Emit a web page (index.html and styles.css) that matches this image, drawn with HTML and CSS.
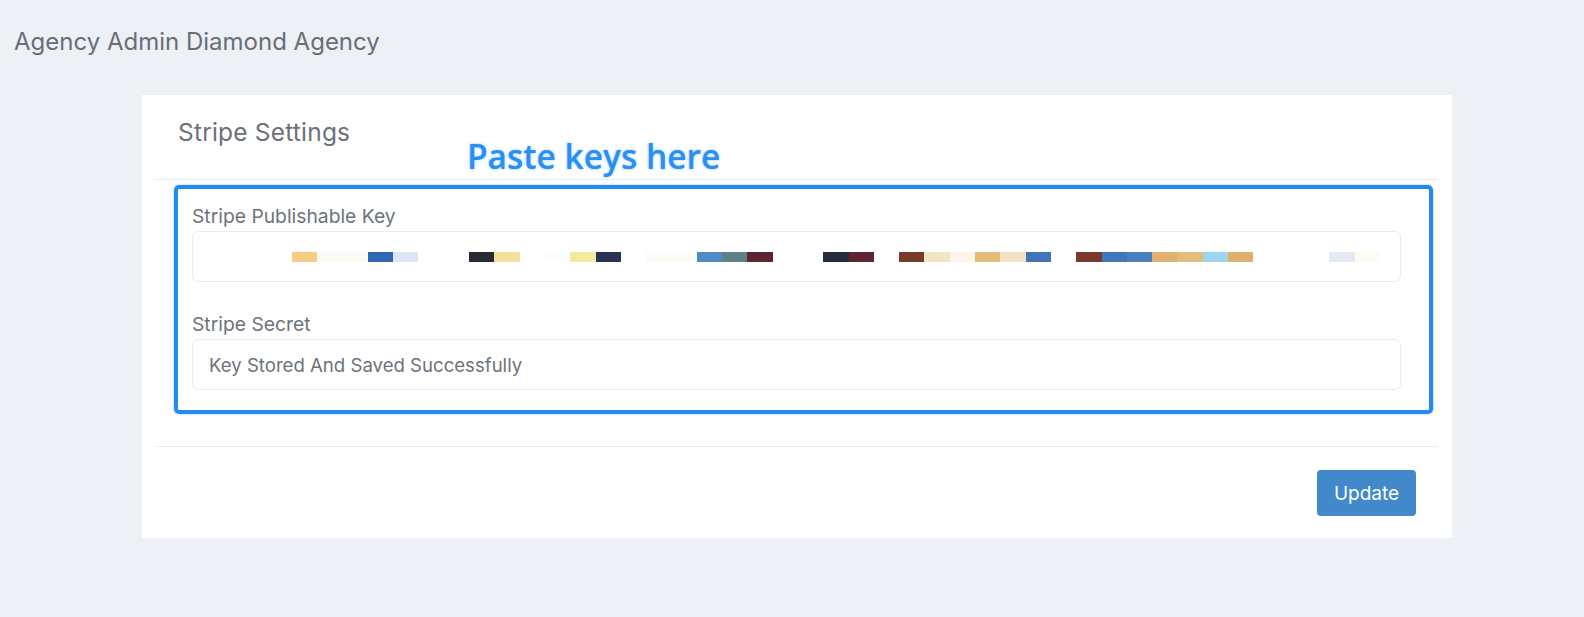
FILE: index.html
```html
<!DOCTYPE html>
<html lang="en">
<head>
<meta charset="utf-8">
<title>Stripe Settings</title>
<link rel="stylesheet" href="styles.css">
</head>
<body>
<div class="page-title">Agency Admin Diamond Agency</div>
<div class="card">
  <div class="card-header">
    <div class="card-title">Stripe Settings</div>
    <div class="annotation">Paste keys here</div>
  </div>
  <div class="highlight">
    <div class="field">
      <label class="field-label">Stripe Publishable Key</label>
      <div class="input input-key"><span class="mosaic"></span></div>
    </div>
    <div class="field">
      <label class="field-label">Stripe Secret</label>
      <div class="input">Key Stored And Saved Successfully</div>
    </div>
  </div>
  <div class="card-footer">
    <button class="btn-update" type="button">Update</button>
  </div>
</div>
</body>
</html>
```

FILE: styles.css
```css
* { box-sizing: border-box; }
html, body { margin: 0; padding: 0; }
body {
  background: #edf0f5;
  font-family: "Inter", "Open Sans", sans-serif;
  color: #6b7079;
  width: 1584px;
  height: 617px;
  overflow: hidden;
}
.page-title {
  padding: 27px 14px 0 14px;
  font-size: 24px;
  line-height: 30px;
  color: #686e77;
}
.card {
  margin: 38px 0 0 142px;
  width: 1310px;
  height: 443px;
  background: #ffffff;
  display: flex;
  flex-direction: column;
}
.card-header {
  position: relative;
  margin: 0 14px;
  padding: 22px 22px 32px 22px;
  border-bottom: 1px solid #e9ecef;
}
.card-title {
  font-size: 24.5px;
  line-height: 30px;
  letter-spacing: 0.2px;
  color: #6b7079;
}
.annotation {
  position: absolute;
  left: 311px;
  top: 41px;
  font-family: "Open Sans", sans-serif;
  font-weight: 600;
  font-size: 33.5px;
  line-height: 40px;
  color: #2a8ff2;
  text-shadow: 0 0 3px rgba(120, 185, 250, 0.8);
}
.highlight {
  margin: 5px 19px 0 32px;
  padding: 15px 28px 20px 14px;
  border: 4px solid #238af5;
  border-radius: 5px;
  box-shadow: 0 0 2px rgba(35, 138, 245, 0.6);
  display: flex;
  flex-direction: column;
  gap: 30px;
}
.field {
  display: flex;
  flex-direction: column;
  gap: 3px;
}
.field-label {
  font-size: 19.3px;
  line-height: 24px;
  color: #6c737c;
}
.input {
  height: 51px;
  border: 1px solid #e9ecef;
  border-radius: 6px;
  display: flex;
  align-items: center;
  padding-left: 16px;
  font-size: 18.6px;
  color: #6c737c;
}
.input-key { padding-left: 99px; }
.mosaic {
  display: block;
  width: 1088px;
  height: 10px;
  margin-top: 1px;
  background: linear-gradient(to right,
    #f6cd83 0 25.3px, #fdf9f4 25.3px 75.9px, #2f67b2 75.9px 101.2px,
    #dde6f4 101.2px 126.5px, #ffffff 126.5px 177.1px, #272b33 177.1px 202.4px,
    #f5df9c 202.4px 227.7px, #ffffff 227.7px 253px, #fbfdf8 253px 278.3px,
    #f2ea9c 278.3px 303.6px, #283256 303.6px 328.9px, #ffffff 328.9px 354.2px,
    #fdfbf5 354.2px 404.8px, #4f8ac8 404.8px 430.1px, #5e7f84 430.1px 455.4px,
    #5c2532 455.4px 480.7px, #ffffff 480.7px 531.3px, #252d3b 531.3px 556.6px,
    #5e2530 556.6px 581.9px, #ffffff 581.9px 607.2px, #7a3a2a 607.2px 632.5px,
    #f1e6c3 632.5px 657.8px, #fdf5ec 657.8px 683.1px, #e6bb78 683.1px 708.4px,
    #f0e2c2 708.4px 733.7px, #3e74b8 733.7px 759px, #ffffff 759px 784.3px,
    #7a392d 784.3px 809.6px, #3f76bc 809.6px 834.9px, #4a80c0 834.9px 860.2px,
    #e2b071 860.2px 885.5px, #e3bd7b 885.5px 910.8px, #9bd5ee 910.8px 936.1px,
    #dfaf6f 936.1px 961.4px, #ffffff 961.4px 1037.3px, #e3eaf4 1037.3px 1062.6px,
    #fcfcf3 1062.6px 1088px);
}
.card-footer {
  margin: 32px 14px 0 14px;
  padding: 23px 22px 0 0;
  border-top: 1px solid #e9ecef;
  display: flex;
  justify-content: flex-end;
}
.btn-update {
  width: 99px;
  height: 46px;
  border: none;
  border-radius: 4px;
  background: #4189cb;
  color: #ffffff;
  font-family: "Inter", "Open Sans", sans-serif;
  font-size: 19px;
  padding: 0;
}
```
